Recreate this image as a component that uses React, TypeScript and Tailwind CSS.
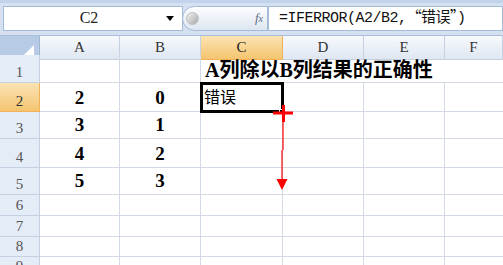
import React from "react";

const cols = ["A", "B", "C", "D", "E", "F"];

const rows = [
  { n: 1, h: "h-[28px]", a: "", b: "" },
  { n: 2, h: "h-[29px]", a: "2", b: "0" },
  { n: 3, h: "h-[27px]", a: "3", b: "1" },
  { n: 4, h: "h-[29px]", a: "4", b: "2" },
  { n: 5, h: "h-[27px]", a: "5", b: "3" },
  { n: 6, h: "h-[21px]", a: "", b: "" },
  { n: 7, h: "h-[21px]", a: "", b: "" },
  { n: 8, h: "h-[20px]", a: "", b: "" },
  { n: 9, h: "h-[20px]", a: "", b: "" },
];

const mono = "font-['Liberation_Mono','Noto_Sans_CJK_SC',monospace]";
const serif = "font-['Liberation_Serif','Noto_Sans_CJK_SC',serif]";
const cjk = "font-['Noto_Sans_CJK_SC',sans-serif]";
const grid = "grid grid-cols-[40px_80px_81px_82px_81px_81px_1fr]";

function FormulaBar() {
  return (
    <div className="h-[36px] bg-[#d5e1f1] border-t-[3px] border-[#c2d4ec] flex items-center pl-[3px] pb-[2px] border-b border-b-[#a9bfd9]">
      <div className="h-[25px] w-[180px] bg-white border border-[#a5bcd8] flex items-center">
        <span className={`${serif} text-[16px] text-[#222] flex-1 text-center pl-[8px]`}>C2</span>
        <span className="mr-[8px] w-0 h-0 border-l-[4px] border-r-[4px] border-t-[5px] border-l-transparent border-r-transparent border-t-black" />
      </div>
      <div className="h-[25px] w-[86px] -ml-[1px] rounded-l-full bg-gradient-to-b from-[#fdfeff] to-[#dde6f1] border border-[#a5bcd8] flex items-center pl-[3px]">
        <div className="w-[13px] h-[13px] rounded-full bg-gradient-to-br from-[#f2f2f2] to-[#a9a9a9] border border-[#bfbfbf]" />
        <span className="ml-auto mr-[4px] font-['Liberation_Serif',serif] italic text-[13px] text-[#5a6b82]">
          f<span className="text-[10px]">x</span>
        </span>
      </div>
      <div className="h-[25px] flex-1 bg-white border border-[#a5bcd8] flex items-center pl-[10px]">
        <span className={`${mono} text-[15px] text-[#111] tracking-[-0.5px] whitespace-nowrap`}>
          =IFERROR(A2/B2,<span className={cjk}>“错误”</span>)
        </span>
      </div>
    </div>
  );
}

function HeaderRow() {
  return (
    <div className={`${grid} h-[19px]`}>
      <div className="relative bg-[#b7cbe6] border-r border-b border-[#9eb6ce]">
        <div className="absolute right-[5px] bottom-[3px] w-0 h-0 border-l-[11px] border-t-[11px] border-l-transparent border-t-transparent border-b-[11px] border-b-white" />
      </div>
      {cols.map((c) => (
        <div
          key={c}
          className={`flex items-center justify-center border-r border-b text-[15px] ${serif} ${
            c === "C"
              ? "bg-gradient-to-b from-[#fbe3b3] to-[#f4c56f] border-[#f2b25a] text-[#222]"
              : "bg-gradient-to-b from-[#f7f9fc] to-[#dfe7f2] border-[#c3d1e3] text-[#333]"
          }`}
        >
          {c}
        </div>
      ))}
    </div>
  );
}

export default function App() {
  return (
    <div className="relative w-[503px] h-[265px] overflow-hidden bg-white">
      <FormulaBar />
      <HeaderRow />
      <div className="relative">
        {rows.map((r) => (
          <div key={r.n} className={`${grid} ${r.h}`}>
            <div
              className={`flex items-end justify-center pb-[1px] border-r border-b text-[15px] leading-[18px] ${serif} ${
                r.n === 2
                  ? "bg-gradient-to-b from-[#fbe3b3] to-[#f4c56f] border-[#f2b25a] text-[#333]"
                  : "bg-[#e4ecf7] border-[#c3d1e3] text-[#555]"
              }`}
            >
              {r.n}
            </div>
            <div className={`flex items-end justify-center pb-[4px] border-r border-b border-[#d3dae6] ${serif} font-bold text-[19px] leading-none text-black`}>
              {r.a}
            </div>
            <div className={`flex items-end justify-center pb-[4px] border-r border-b border-[#d3dae6] ${serif} font-bold text-[19px] leading-none text-black`}>
              {r.b}
            </div>
            {r.n === 1 ? (
              <div className="col-span-4 flex items-end pl-[4px] pb-[2px] border-b border-[#d3dae6]">
                <span className={`${serif} font-bold text-[20px] leading-none text-black whitespace-nowrap`}>
                  A列除以B列结果的正确性
                </span>
              </div>
            ) : (
              <>
                <div className="flex items-end pl-[3px] pb-[7px] border-r border-b border-[#d3dae6]">
                  {r.n === 2 && <span className={`${cjk} text-[16px] leading-none text-black`}>错误</span>}
                </div>
                <div className="border-r border-b border-[#d3dae6]" />
                <div className="border-r border-b border-[#d3dae6]" />
                <div className="border-b border-[#d3dae6]" />
              </>
            )}
          </div>
        ))}
        {/* active cell C2 */}
        <div className="absolute left-[200px] top-[27px] w-[84px] h-[31px] border-[3px] border-black pointer-events-none" />
        <div className="absolute left-[279px] top-[54px] w-[6px] h-[6px] bg-black border border-white" />
      </div>

      <svg className="absolute left-0 top-0 pointer-events-none" width="503" height="265" viewBox="0 0 503 265">
        <rect x="273" y="111.5" width="20" height="3" fill="#ff0000" />
        <rect x="282" y="105" width="3" height="17" fill="#ff0000" />
        <line x1="283" y1="122" x2="283" y2="150" stroke="#ff0000" strokeWidth="1.2" />
        <line x1="282" y1="150" x2="282" y2="182" stroke="#ff0000" strokeWidth="1.2" />
        <polygon points="276.5,179 287.5,179 282,190" fill="#ff0000" />
      </svg>
    </div>
  );
}
